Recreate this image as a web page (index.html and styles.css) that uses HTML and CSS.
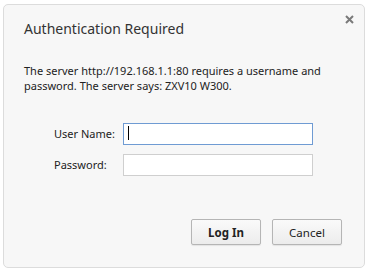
FILE: index.html
```html
<!DOCTYPE html>
<html lang="en">
<head>
    <meta charset="UTF-8">
    <title>Authentication Required</title>
    <link rel="stylesheet" href="styles.css">
</head>
<body>
    <div class="dialog">
        <svg class="close" width="9" height="9" viewBox="0 0 9 9">
            <path d="M1 1 L8 8 M8 1 L1 8" stroke="#7a7a7a" stroke-width="2"/>
        </svg>
        <h1>Authentication Required</h1>
        <p class="message">The server http://192.168.1.1:80 requires a username and password. The server says: ZXV10 W300.</p>

        <div class="fields">
            <label for="username">User Name:</label>
            <div class="field">
                <input type="text" id="username" class="focused">
                <span class="caret"></span>
            </div>
            <label for="password">Password:</label>
            <div class="field">
                <input type="password" id="password">
            </div>
        </div>

        <div class="buttons">
            <button class="primary">Log In</button>
            <button>Cancel</button>
        </div>
    </div>
</body>
</html>
```

FILE: styles.css
```css
body {
    margin: 0;
    background-color: #fff;
    font-family: "Noto Sans", "Open Sans", sans-serif;
    color: #222;
}
.dialog {
    position: relative;
    box-sizing: border-box;
    width: 362px;
    height: 264px;
    margin: 4px 0 0 3px;
    padding: 14px 22px 0 20px;
    background-color: #f7f7f7;
    border: 1px solid #dcdcdc;
    border-radius: 5px;
}
.close {
    position: absolute;
    top: 10px;
    right: 10px;
}
h1 {
    margin: 0;
    font-size: 14px;
    line-height: 20px;
    font-weight: normal;
    color: #333;
}
.message {
    margin: 24px 0 0 0;
    font-size: 11px;
    line-height: 15px;
    color: #222;
}
.fields {
    display: grid;
    grid-template-columns: 69px 190px;
    row-gap: 9px;
    align-items: center;
    margin: 29px 0 0 30px;
}
label {
    font-size: 11px;
    color: #222;
}
.field {
    position: relative;
    height: 22px;
}
input {
    box-sizing: border-box;
    width: 190px;
    height: 22px;
    margin: 0;
    padding: 0 4px;
    background: #fff;
    border: 1px solid #cfcfcf;
    outline: none;
    font-family: inherit;
}
input.focused {
    border-color: #6f9bd3;
}
.caret {
    position: absolute;
    left: 5px;
    top: 4px;
    width: 1px;
    height: 14px;
    background: #000;
}
.buttons {
    display: flex;
    justify-content: flex-end;
    gap: 11px;
    margin-top: 44px;
}
button {
    box-sizing: border-box;
    width: 70px;
    height: 26px;
    padding: 0;
    font-family: inherit;
    font-size: 11.5px;
    color: #222;
    background: linear-gradient(#fafafa, #ececec);
    border: 1px solid #b5b5b5;
    border-radius: 2px;
    box-shadow: 0 1px 1px rgba(0,0,0,0.08);
}
button.primary {
    font-weight: bold;
}
```
